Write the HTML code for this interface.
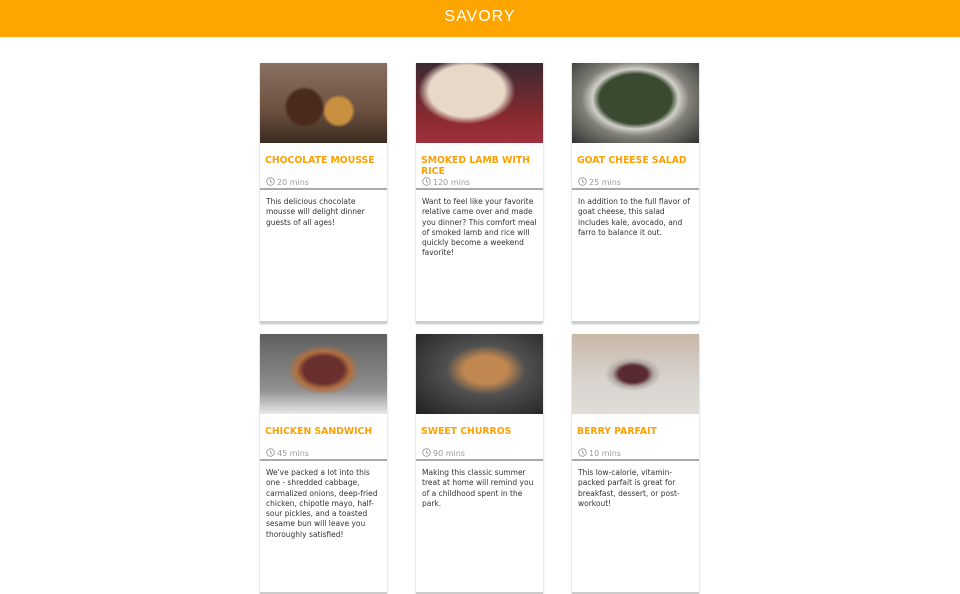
<!DOCTYPE html>
<html><head><style>
*{margin:0;padding:0;box-sizing:border-box}
body{width:960px;height:540px;background:#fff;font-family:"DejaVu Sans","Liberation Sans",sans-serif;overflow:hidden;position:relative}
.hdr{position:absolute;left:0;top:0;width:960px;height:37px;background:#ffa500;color:#fff;text-align:center;font-size:16px;line-height:34px;letter-spacing:1px;font-family:"Liberation Sans",sans-serif}
.card{position:absolute;width:127px;height:260px;background:#fff;box-shadow:0 1px 2px rgba(0,0,0,.25);border-bottom:2px solid #ccc}
.img{height:80px}
.t{position:absolute;left:5px;top:93px;width:122px;color:#ffa000;font-weight:bold;font-size:9.3px;line-height:10.5px}
.m{position:absolute;left:6px;top:114px;color:#999;font-size:8px;line-height:12px}
.m svg{vertical-align:-1px;margin-right:2px}
.line{position:absolute;left:0;top:125px;width:127px;height:2px;background:#aaa}
.d{position:absolute;left:6px;top:134px;width:120px;font-size:7.5px;line-height:10.3px;color:#333}
</style></head><body>
<div class="hdr">SAVORY</div>

<div class="card" style="left:260px;top:63px"><div class="img" style="background:radial-gradient(circle at 35% 55%,#4a2a1a 0 18%,transparent 22%),radial-gradient(circle at 62% 60%,#c89040 0 14%,transparent 18%),linear-gradient(#8a7060,#6b5040 60%,#3a2a20)"></div>
<div class="t">CHOCOLATE MOUSSE</div><div class="m"><svg width="9" height="9" viewBox="0 0 10 10"><circle cx="5" cy="5" r="4.2" fill="none" stroke="#999"/><path d="M5 2.5V5l1.8 1.5" fill="none" stroke="#999"/></svg>20 mins</div><div class="line"></div>
<div class="d">This delicious chocolate mousse will delight dinner guests of all ages!</div></div>

<div class="card" style="left:416px;top:63px"><div class="img" style="background:radial-gradient(ellipse at 40% 35%,#e8d8c8 0 35%,transparent 45%),linear-gradient(#3a2a30,#8a2a30 70%,#a03040)"></div>
<div class="t">SMOKED LAMB WITH RICE</div><div class="m"><svg width="9" height="9" viewBox="0 0 10 10"><circle cx="5" cy="5" r="4.2" fill="none" stroke="#999"/><path d="M5 2.5V5l1.8 1.5" fill="none" stroke="#999"/></svg>120 mins</div><div class="line"></div>
<div class="d">Want to feel like your favorite relative came over and made you dinner? This comfort meal of smoked lamb and rice will quickly become a weekend favorite!</div></div>

<div class="card" style="left:572px;top:63px"><div class="img" style="background:radial-gradient(ellipse at 50% 45%,#3a4a30 0 40%,#d0d0c8 48%,#808078 60%,#303030)"></div>
<div class="t">GOAT CHEESE SALAD</div><div class="m"><svg width="9" height="9" viewBox="0 0 10 10"><circle cx="5" cy="5" r="4.2" fill="none" stroke="#999"/><path d="M5 2.5V5l1.8 1.5" fill="none" stroke="#999"/></svg>25 mins</div><div class="line"></div>
<div class="d">In addition to the full flavor of goat cheese, this salad includes kale, avocado, and farro to balance it out.</div></div>

<div class="card" style="left:260px;top:334px"><div class="img" style="background:radial-gradient(ellipse at 50% 45%,#6a3030 0 22%,#b07040 30%,transparent 40%),linear-gradient(#606060,#909090 70%,#e8e8e8)"></div>
<div class="t">CHICKEN SANDWICH</div><div class="m"><svg width="9" height="9" viewBox="0 0 10 10"><circle cx="5" cy="5" r="4.2" fill="none" stroke="#999"/><path d="M5 2.5V5l1.8 1.5" fill="none" stroke="#999"/></svg>45 mins</div><div class="line"></div>
<div class="d">We've packed a lot into this one - shredded cabbage, carmalized onions, deep-fried chicken, chipotle mayo, half-sour pickles, and a toasted sesame bun will leave you thoroughly satisfied!</div></div>

<div class="card" style="left:416px;top:334px"><div class="img" style="background:radial-gradient(ellipse at 55% 45%,#c08850 0 22%,#505050 40%,#202020)"></div>
<div class="t">SWEET CHURROS</div><div class="m"><svg width="9" height="9" viewBox="0 0 10 10"><circle cx="5" cy="5" r="4.2" fill="none" stroke="#999"/><path d="M5 2.5V5l1.8 1.5" fill="none" stroke="#999"/></svg>90 mins</div><div class="line"></div>
<div class="d">Making this classic summer treat at home will remind you of a childhood spent in the park.</div></div>

<div class="card" style="left:572px;top:334px"><div class="img" style="background:radial-gradient(ellipse at 48% 50%,#5a2a30 0 15%,#b0a8a0 22%,transparent 30%),linear-gradient(#c8b8a8,#d8d4d0 60%,#e0dcd8)"></div>
<div class="t">BERRY PARFAIT</div><div class="m"><svg width="9" height="9" viewBox="0 0 10 10"><circle cx="5" cy="5" r="4.2" fill="none" stroke="#999"/><path d="M5 2.5V5l1.8 1.5" fill="none" stroke="#999"/></svg>10 mins</div><div class="line"></div>
<div class="d">This low-calorie, vitamin-packed parfait is great for breakfast, dessert, or post-workout!</div></div>
</body></html>
